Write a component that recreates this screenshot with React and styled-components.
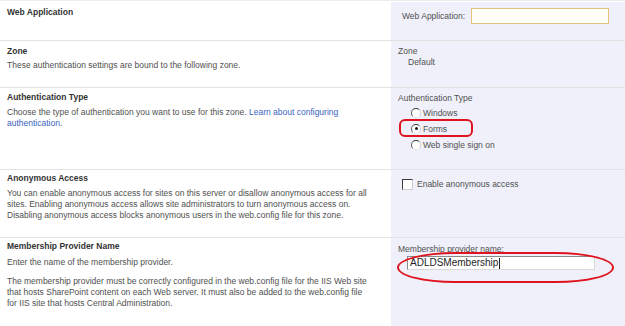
import React from "react";
import styled, { createGlobalStyle } from "styled-components";

const Global = createGlobalStyle`
  html, body {
    margin: 0;
    padding: 0;
    background: #ffffff;
  }
  body {
    font-family: "Liberation Sans", Arial, sans-serif;
    font-size: 8.5px;
    color: #4c4c4c;
  }
`;

const Page = styled.div`
  width: 625px;
  height: 326px;
  overflow: hidden;
  padding-top: 1px;
  box-sizing: border-box;
  border-top: 1px solid #ececec;
`;

const Row = styled.div`
  display: grid;
  grid-template-columns: 391px 1fr;
  height: ${(p) => p.h}px;
  border-top: ${(p) => (p.first ? "none" : "1px solid #e2e2e2")};
  box-sizing: border-box;
`;

const Left = styled.div`
  padding: ${(p) => p.pt ?? 5}px 22px 5px 7px;
  line-height: 11px;
`;

const Right = styled.div`
  background: #eff0fa;
  padding: ${(p) => p.pad || "5px 7px"};
  line-height: 11px;
  position: relative;
`;

const Title = styled.div`
  font-weight: bold;
  color: #333333;
  margin-bottom: ${(p) => p.mb ?? 3}px;
`;

const Desc = styled.div`
  color: #505050;
  margin-bottom: ${(p) => p.mb || 0}px;
`;

const Link = styled.a`
  color: #3a63c0;
  text-decoration: none;
`;

const InlineField = styled.div`
  display: flex;
  align-items: center;
  gap: 6px;
  padding-left: 4px;
`;

const WebAppInput = styled.div`
  width: 136px;
  height: 14px;
  border: 1px solid #e3c47f;
  background: #fffffb;
`;

const Label = styled.div`
  color: #505050;
  padding-left: ${(p) => p.indent || 0}px;
`;

const Options = styled.div`
  display: flex;
  flex-direction: column;
  gap: 5px;
  padding-left: 13px;
  margin-top: 4px;
`;

const Option = styled.label`
  display: flex;
  align-items: center;
  gap: 2px;
  color: #505050;
  position: relative;
  height: 11px;
`;

const Radio = styled.span`
  width: 8px;
  height: 8px;
  border-radius: 50%;
  border: 1px solid;
  border-color: #3c3c3c #d0d0d0 #e8e8e8 #5a5a5a;
  background: #ffffff;
  display: inline-flex;
  align-items: center;
  justify-content: center;
  position: relative;
  top: -1px;

  &::after {
    content: "";
    width: 3px;
    height: 3px;
    border-radius: 50%;
    background: ${(p) => (p.checked ? "#1a1a1a" : "transparent")};
  }
`;

const Highlight = styled.span`
  position: absolute;
  left: -12px;
  top: -5px;
  width: 70px;
  height: 14px;
  border: 2px solid #e0141e;
  border-radius: 6px;
  pointer-events: none;
`;

const Check = styled.span`
  width: 9px;
  height: 9px;
  border: 1px solid #3c3c3c;
  border-right-color: #cfcfcf;
  border-bottom-color: #cfcfcf;
  background: #ffffff;
`;

const CheckRow = styled.label`
  display: flex;
  align-items: center;
  gap: 4px;
  color: #505050;
  padding-left: 4px;
  margin-top: 4px;
`;

const MemberLabel = styled.div`
  color: #505050;
  margin-top: 1px;
`;

const MemberInput = styled.div`
  margin: 1px 0 0 9px;
  width: 184px;
  height: 12px;
  border: 1px solid #8a8a8a;
  border-right-color: #d8d8d8;
  border-bottom-color: #d8d8d8;
  background: #ffffff;
  font-size: 10px;
  line-height: 12px;
  color: #1e1e1e;
  padding-left: 2px;
  display: flex;
  align-items: center;
`;

const Caret = styled.span`
  width: 1px;
  height: 11px;
  background: #222;
  margin-left: 1px;
`;

const Ellipse = styled.span`
  position: absolute;
  left: 6px;
  top: 14px;
  width: 213px;
  height: 27px;
  border: 2px solid #e0141e;
  border-radius: 60px / 16px;
  pointer-events: none;
`;

export default function App() {
  return (
    <Page>
      <Global />
      <Row h={38} first>
        <Left>
          <Title>Web Application</Title>
        </Left>
        <Right pad="6px 7px">
          <InlineField>
            <Label>Web Application:</Label>
            <WebAppInput />
          </InlineField>
        </Right>
      </Row>

      <Row h={47}>
        <Left>
          <Title>Zone</Title>
          <Desc>These authentication settings are bound to the following zone.</Desc>
        </Left>
        <Right>
          <Label>Zone</Label>
          <Label indent={10}>Default</Label>
        </Right>
      </Row>

      <Row h={82}>
        <Left pt={4}>
          <Title mb={4}>Authentication Type</Title>
          <Desc>
            Choose the type of authentication you want to use for this zone.{" "}
            <Link href="#">Learn about configuring</Link>
            <br />
            <Link href="#">authentication.</Link>
          </Desc>
        </Left>
        <Right>
          <Label>Authentication Type</Label>
          <Options>
            <Option>
              <Radio />
              Windows
            </Option>
            <Option>
              <Radio checked />
              Forms
              <Highlight />
            </Option>
            <Option>
              <Radio />
              Web single sign on
            </Option>
          </Options>
        </Right>
      </Row>

      <Row h={68}>
        <Left pt={3}>
          <Title mb={4}>Anonymous Access</Title>
          <Desc>
            You can enable anonymous access for sites on this server or disallow anonymous access for all
            sites. Enabling anonymous access allows site administrators to turn anonymous access on.
            Disabling anonymous access blocks anonymous users in the web.config file for this zone.
          </Desc>
        </Left>
        <Right>
          <CheckRow>
            <Check />
            Enable anonymous access
          </CheckRow>
        </Right>
      </Row>

      <Row h={90}>
        <Left pt={3}>
          <Title mb={5}>Membership Provider Name</Title>
          <Desc mb={8}>Enter the name of the membership provider.</Desc>
          <Desc>
            The membership provider must be correctly configured in the web.config file for the IIS Web site
            that hosts SharePoint content on each Web server. It must also be added to the web.config file
            for IIS site that hosts Central Administration.
          </Desc>
        </Left>
        <Right>
          <MemberLabel>Membership provider name:</MemberLabel>
          <MemberInput>
            ADLDSMembership
            <Caret />
          </MemberInput>
          <Ellipse />
        </Right>
      </Row>
    </Page>
  );
}
